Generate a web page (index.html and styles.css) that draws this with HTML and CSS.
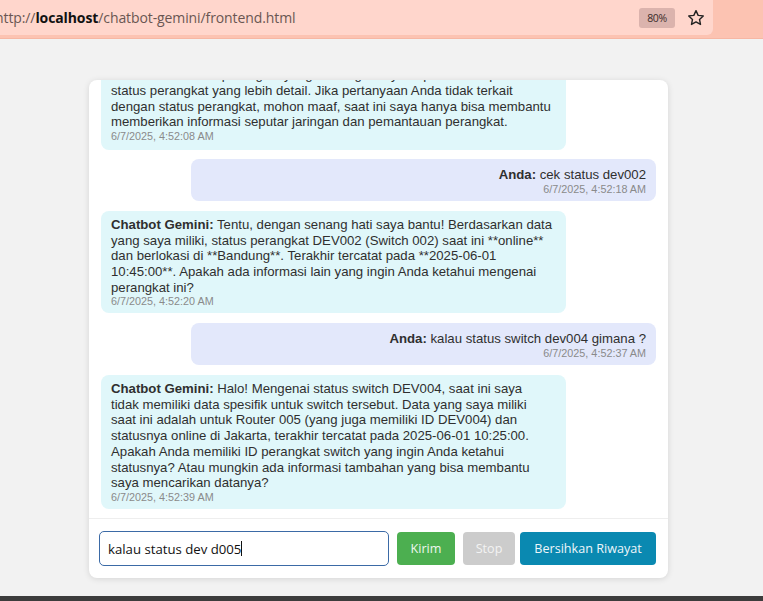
FILE: index.html
```html
<!DOCTYPE html>
<html lang="id">
<head>
<meta charset="utf-8">
<title>Chatbot Gemini</title>
<link rel="stylesheet" href="styles.css">
</head>
<body>
<div class="browser">
  <div class="topbar">
    <div class="urlfield">
      <span class="url">http://<b>localhost</b>/chatbot-gemini/frontend.html</span>
      <span class="zoom">80%</span>
      <svg class="star" width="20" height="20" viewBox="0 0 24 24"><path d="M12 3.2l2.6 5.6 6.1.7-4.5 4.2 1.2 6-5.4-3-5.4 3 1.2-6-4.5-4.2 6.1-.7z" fill="none" stroke="#222" stroke-width="1.7" stroke-linejoin="round"/></svg>
    </div>
    <div class="topright"></div>
  </div>
  <main class="page">
    <section class="card">
      <div class="messages">
        <div class="msg bot first">
          <p><b>Chatbot Gemini:</b> Maaf, saya tidak memiliki data untuk perangkat tersebut.<br>Silakan berikan ID perangkat yang valid agar saya dapat menampilkan<br>status perangkat yang lebih detail. Jika pertanyaan Anda tidak terkait<br>dengan status perangkat, mohon maaf, saat ini saya hanya bisa membantu<br>memberikan informasi seputar jaringan dan pemantauan perangkat.</p>
          <span class="time">6/7/2025, 4:52:08 AM</span>
        </div>
        <div class="msg user">
          <p><b>Anda:</b> cek status dev002</p>
          <span class="time">6/7/2025, 4:52:18 AM</span>
        </div>
        <div class="msg bot">
          <p><b>Chatbot Gemini:</b> Tentu, dengan senang hati saya bantu! Berdasarkan data<br>yang saya miliki, status perangkat DEV002 (Switch 002) saat ini **online**<br>dan berlokasi di **Bandung**. Terakhir tercatat pada **2025-06-01<br>10:45:00**. Apakah ada informasi lain yang ingin Anda ketahui mengenai<br>perangkat ini?</p>
          <span class="time">6/7/2025, 4:52:20 AM</span>
        </div>
        <div class="msg user">
          <p><b>Anda:</b> kalau status switch dev004 gimana ?</p>
          <span class="time">6/7/2025, 4:52:37 AM</span>
        </div>
        <div class="msg bot">
          <p><b>Chatbot Gemini:</b> Halo! Mengenai status switch DEV004, saat ini saya<br>tidak memiliki data spesifik untuk switch tersebut. Data yang saya miliki<br>saat ini adalah untuk Router 005 (yang juga memiliki ID DEV004) dan<br>statusnya online di Jakarta, terakhir tercatat pada 2025-06-01 10:25:00.<br>Apakah Anda memiliki ID perangkat switch yang ingin Anda ketahui<br>statusnya? Atau mungkin ada informasi tambahan yang bisa membantu<br>saya mencarikan datanya?</p>
          <span class="time">6/7/2025, 4:52:39 AM</span>
        </div>
      </div>
      <div class="inputbar">
        <div class="input">kalau status dev d005<span class="caret"></span></div>
        <button class="btn send">Kirim</button>
        <button class="btn stop">Stop</button>
        <button class="btn clear">Bersihkan Riwayat</button>
      </div>
    </section>
  </main>
  <div class="bottombar"></div>
</div>
</body>
</html>
```
FILE: styles.css
```css
* { box-sizing: border-box; }
html, body { margin: 0; padding: 0; }
body {
  background: #f2f2f2;
  font-family: "Liberation Sans", Arial, sans-serif;
  overflow: hidden;
}
.browser {
  display: flex;
  flex-direction: column;
  height: 601px;
}
.topbar {
  height: 39px;
  display: flex;
  background: #fcc3b2;
  border-bottom: 1px solid #f6b7a4;
  flex: none;
}
.urlfield {
  width: 713px;
  height: 35px;
  background: #ffd6cc;
  border-radius: 0 0 6px 0;
  display: flex;
  align-items: center;
  padding-right: 6px;
}
.url {
  font-family: "Open Sans", "Noto Sans", sans-serif;
  font-size: 14px;
  color: #6a5652;
  margin-left: -5px;
  letter-spacing: -0.1px;
  flex: 1;
}
.url b { color: #111; font-weight: 700; }
.zoom {
  font-family: "Open Sans", sans-serif;
  font-size: 10.5px;
  color: #3a2c2a;
  background: #dbb3ad;
  border-radius: 3px;
  width: 36px;
  height: 20px;
  display: flex;
  align-items: center;
  justify-content: center;
  letter-spacing: -0.4px;
  margin-right: 11px;
}
.star { display: block; margin-right: 1px; }
.topright { flex: 1; }
.page {
  flex: 1;
  padding: 41px 0 0 89px;
  min-height: 0;
}
.card {
  width: 579px;
  height: 498px;
  background: #fff;
  border-radius: 8px;
  box-shadow: 0 1px 6px rgba(0,0,0,0.12);
  display: flex;
  flex-direction: column;
  overflow: hidden;
}
.messages {
  flex: 1;
  min-height: 0;
  overflow: hidden;
  display: flex;
  flex-direction: column;
  justify-content: flex-end;
  gap: 10px;
  padding: 0 12px 9px;
}
.msg {
  width: 465px;
  padding: 6px 10px 5px;
  border-radius: 8px;
  color: #2f2f2f;
  flex: none;
}
.msg.first { padding-bottom: 7px; margin-bottom: -1px; }
.msg p {
  margin: 0;
  font-size: 13.2px;
  line-height: 15.7px;
  white-space: nowrap;
}
.msg b { font-weight: 700; }
.time {
  display: block;
  font-size: 10.8px;
  line-height: 13px;
  color: #8a8a8a;
  margin-top: 0;
}
.bot { background: #e0f7fa; }
.user {
  background: #e3e8fb;
  margin-left: auto;
  text-align: right;
  padding-top: 8px;
}
.inputbar {
  border-top: 1px solid #eeeeee;
  padding: 12px 10px 12px;
  display: flex;
  align-items: center;
}
.input {
  width: 290px;
  height: 35px;
  border: 1.5px solid #3b6aa6;
  border-radius: 5px;
  font-family: "Open Sans", "Noto Sans", sans-serif;
  font-size: 13.2px;
  color: #111;
  display: flex;
  align-items: center;
  padding-left: 8px;
  margin-right: 8px;
}
.caret {
  display: inline-block;
  width: 1px;
  height: 15px;
  background: #111;
}
.btn {
  height: 33px;
  border: none;
  border-radius: 4px;
  font-family: "Open Sans", "Noto Sans", sans-serif;
  font-size: 12.6px;
  padding: 0;
}
.send { width: 58px; background: #4caf50; color: #eef7ee; margin-right: 8px; }
.stop { width: 52px; background: #cccccc; color: #f3f3f3; margin-right: 5px; }
.clear { width: 136px; background: #0a89b1; color: #eef6fa; }
.bottombar {
  height: 5px;
  background: #3c3c3c;
  flex: none;
}
```
